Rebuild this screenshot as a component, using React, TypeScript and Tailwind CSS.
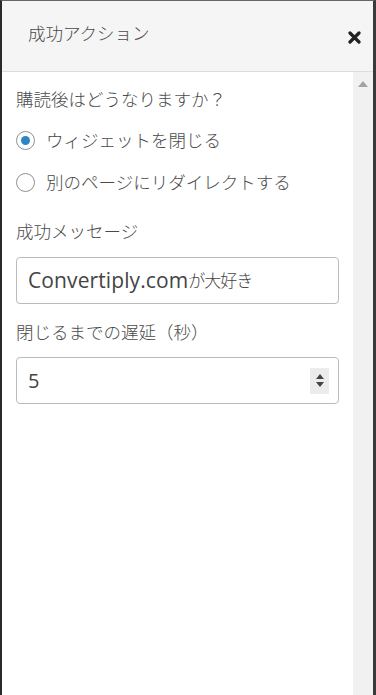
import { useState } from "react";

const font = { fontFamily: '"Open Sans", "Noto Sans CJK JP", sans-serif' };

function Radio({ checked, label }: { checked: boolean; label: string }) {
  return (
    <label className="flex items-center h-[42px] gap-[11px] cursor-pointer">
      <span className="w-[19px] h-[19px] rounded-full border border-[#8c8f94] bg-white flex items-center justify-center shrink-0">
        {checked && <span className="w-[9px] h-[9px] rounded-full bg-[#2b86c5]" />}
      </span>
      <span className="text-[17.5px] text-[#4a4a4a] font-light">{label}</span>
    </label>
  );
}

export default function App() {
  const [delay] = useState("5");

  return (
    <div
      style={font}
      className="w-[376px] h-[695px] flex flex-col bg-white border-l-[2px] border-r-[3px] border-t border-l-[#2a2a2a] border-r-[#3a3a3a] border-t-[#666] overflow-hidden"
    >
      {/* header */}
      <div className="h-[71px] shrink-0 bg-[#f5f5f5] border-b border-[#dddddd] flex items-start justify-between">
        <h2 className="pl-[26px] pt-[19px] text-[17.5px] text-[#4a4a4a] font-light leading-[26px]">
          成功アクション
        </h2>
        <button className="mt-[30px] mr-[12px] text-[#222]">
          <svg width="13" height="13" viewBox="0 0 13 13">
            <path d="M2 2 L11 11 M11 2 L2 11" stroke="#222" strokeWidth="3.2" strokeLinecap="round" />
          </svg>
        </button>
      </div>

      {/* body */}
      <div className="flex flex-1 min-h-0">
        <div className="flex-1 pl-[14px] pr-[14px] pt-[16px]">
          <p className="text-[17.5px] text-[#4a4a4a] font-light leading-[22px]">購読後はどうなりますか？</p>
          <div className="mt-[9px] flex flex-col">
            <Radio checked label="ウィジェットを閉じる" />
            <Radio checked={false} label="別のページにリダイレクトする" />
          </div>

          <p className="mt-[17px] text-[17.5px] text-[#4a4a4a] font-light leading-[22px]">成功メッセージ</p>
          <div className="mt-[15px] h-[47px] rounded-[4px] border border-[#b8bcc0] px-[11px] flex items-center text-[#444] whitespace-nowrap">
            <span className="text-[21px] tracking-[0.1px]">Convertiply.com</span>
            <span className="text-[17px] tracking-[-1px] font-light">が大好き</span>
          </div>

          <p className="mt-[17px] text-[17.5px] text-[#4a4a4a] font-light leading-[22px]">閉じるまでの遅延（秒）</p>
          <div className="mt-[14px] h-[47px] rounded-[4px] border border-[#b8bcc0] flex items-center justify-between pl-[11px] pr-[9px]">
            <span className="text-[20px] text-[#444]">{delay}</span>
            <span className="w-[19px] h-[26px] bg-[#ececec] flex flex-col items-center justify-center gap-[3px]">
              <svg width="8" height="5" viewBox="0 0 8 5">
                <path d="M0 5 L4 0 L8 5 Z" fill="#444" />
              </svg>
              <svg width="8" height="5" viewBox="0 0 8 5">
                <path d="M0 0 L4 5 L8 0 Z" fill="#444" />
              </svg>
            </span>
          </div>
        </div>

        {/* scrollbar */}
        <div className="w-[20px] shrink-0 bg-[#f1f1f1] flex justify-center pt-[9px]">
          <svg width="10" height="6" viewBox="0 0 10 6">
            <path d="M0 6 L5 0 L10 6 Z" fill="#a3a3a3" />
          </svg>
        </div>
      </div>
    </div>
  );
}
